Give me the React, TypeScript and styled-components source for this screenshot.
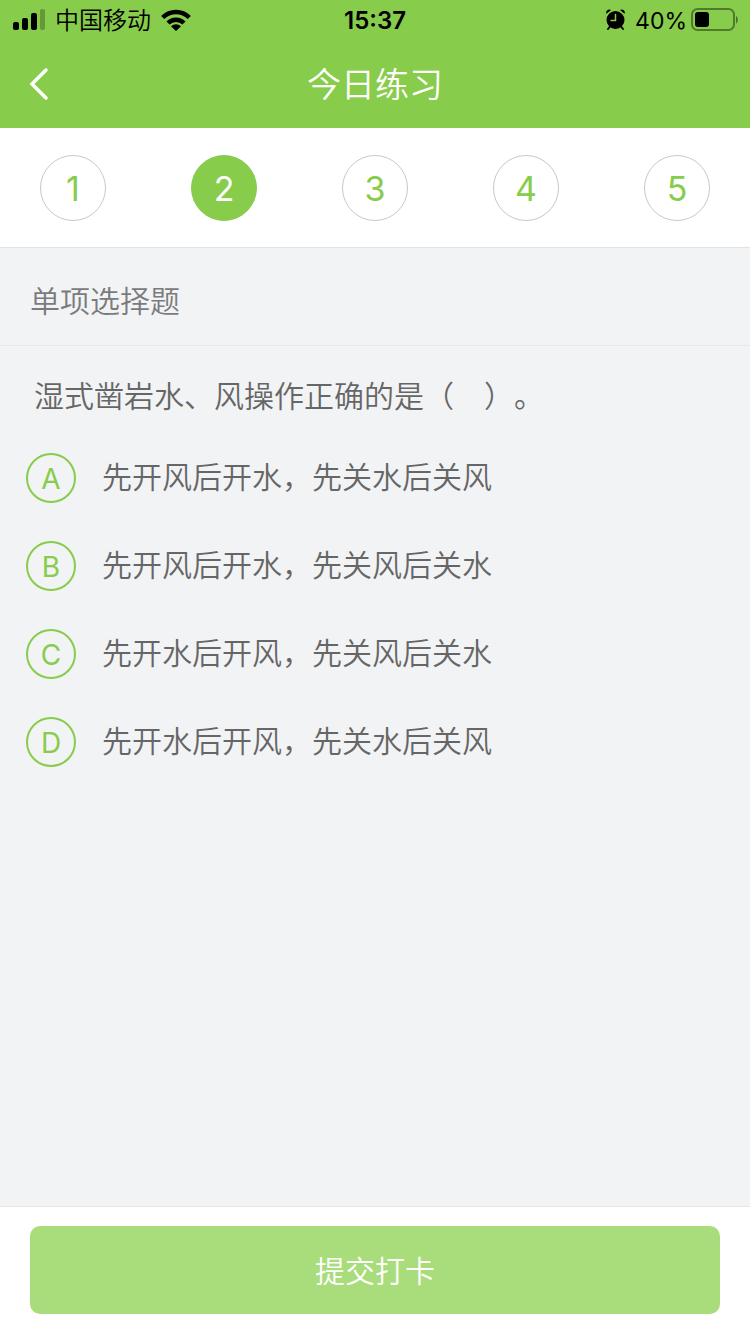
import React, { useState } from "react";
import styled, { createGlobalStyle } from "styled-components";

const GlobalStyle = createGlobalStyle`
  *, *::before, *::after { box-sizing: border-box; }
  body {
    margin: 0;
    background: #f2f3f5;
    font-family: Inter, "Noto Sans CJK SC", sans-serif;
    font-weight: 350;
    text-spacing-trim: space-all;
    color: #666;
  }
  button { font: inherit; padding: 0; border: 0; cursor: pointer; }
`;

const Page = styled.div`
  display: flex;
  flex-direction: column;
  min-height: 100vh;
`;

const Header = styled.header`
  background: #87cc4b;
  color: #fff;
`;

const StatusBar = styled.div`
  display: grid;
  grid-template-columns: 1fr auto 1fr;
  align-items: center;
  height: 40px;
  padding: 0 12px;
  color: #000;
  font-size: 24px;
  line-height: 40px;
`;

const StatusGroup = styled.div<{ $end?: boolean }>`
  display: flex;
  align-items: center;
  justify-content: ${(p) => (p.$end ? "flex-end" : "flex-start")};
  gap: 10px;
`;

const StatusText = styled.span`
  padding-top: 2px;
  line-height: 38px;
`;

const Time = styled(StatusText)`
  font-size: 24px;
  font-weight: 600;
`;

const Level = styled.span`
  display: flex;
  align-items: center;
  gap: 4px;
  font-size: 23px;
  font-weight: 400;
`;

const NavBar = styled.div`
  display: grid;
  grid-template-columns: 1fr auto 1fr;
  align-items: center;
  height: 88px;
  padding: 0 24px;
`;

const BackButton = styled.button`
  display: flex;
  align-items: center;
  justify-self: start;
  height: 60px;
  background: none;
  color: inherit;
`;

const Title = styled.h1`
  margin: 0;
  padding-top: 2px;
  font-size: 34px;
  font-weight: 350;
  line-height: 48px;
`;

const Steps = styled.nav`
  display: flex;
  justify-content: space-between;
  align-items: center;
  height: 120px;
  padding: 0 40px;
  background: #fff;
  border-bottom: 1px solid #e2e3e5;
`;

const StepButton = styled.button<{ $active: boolean }>`
  width: 66px;
  height: 66px;
  padding-top: 2px;
  border: 1px solid ${(p) => (p.$active ? "#87cc4b" : "#c8c8c8")};
  border-radius: 50%;
  background: ${(p) => (p.$active ? "#87cc4b" : "#fff")};
  color: ${(p) => (p.$active ? "#fff" : "#87cc4b")};
  font-size: 34px;
  font-weight: 400;
  line-height: 62px;
`;

const SectionTitle = styled.h2`
  margin: 0;
  padding: 31px 30px 22px;
  border-bottom: 1px solid #e6e7ea;
  color: #7b7b7d;
  font-size: 30px;
  font-weight: 350;
  line-height: 44px;
`;

const Question = styled.fieldset`
  flex: 1;
  min-width: 0;
  margin: 0;
  padding: 28px 26px 40px;
  border: 0;
  font-size: 30px;
  line-height: 44px;
`;

const QuestionText = styled.legend`
  float: left;
  width: 100%;
  padding: 0 8px;
  margin-bottom: 16px;
`;

const Options = styled.div`
  clear: both;
  display: flex;
  flex-direction: column;
`;

const Option = styled.label`
  display: flex;
  align-items: center;
  gap: 26px;
  min-height: 88px;
  cursor: pointer;
`;

const OptionRadio = styled.input`
  position: absolute;
  width: 50px;
  height: 50px;
  margin: 0;
  opacity: 0;
`;

const OptionLetter = styled.span`
  flex: none;
  width: 50px;
  height: 50px;
  border: 2px solid #87cc4b;
  border-radius: 50%;
  color: #87cc4b;
  font-size: 28px;
  font-weight: 400;
  line-height: 48px;
  text-align: center;

  ${OptionRadio}:checked + & {
    background: #87cc4b;
    color: #fff;
  }
`;

const OptionText = styled.span`
  padding-bottom: 2px;
`;

const Footer = styled.footer`
  padding: 19px 30px 20px;
  background: #fff;
  border-top: 1px solid #e6e7ea;
`;

const SubmitButton = styled.button`
  display: block;
  width: 100%;
  height: 88px;
  padding-bottom: 2px;
  border-radius: 10px;
  background: #a9dc7a;
  color: #fff;
  font-size: 30px;
`;

const SignalIcon = () => (
  <svg width="33" height="22" viewBox="-1 0 33 22" aria-hidden="true">
    <rect x="0" y="13" width="6" height="8" rx="2" />
    <rect x="9" y="9" width="6" height="12" rx="2" />
    <rect x="18" y="4" width="6" height="17" rx="2" />
    <rect x="27" y="0" width="5" height="21" rx="2" opacity="0.25" />
  </svg>
);

const WifiIcon = () => (
  <svg width="30" height="22" viewBox="0 0 30 22" aria-hidden="true">
    <g fill="none" stroke="#000" strokeWidth="4.5">
      <path d="M1.7 8.5a19 19 0 0 1 26.6 0" />
      <path d="M7 14a11.500 11.500 0 0 1 16 0" />
    </g>
    <path d="M15 22l-5-4.800a7.200 7.200 0 0 1 10 0z" />
  </svg>
);

const AlarmIcon = () => (
  <svg width="19" height="22" viewBox="0 0 19 22" aria-hidden="true">
    <circle cx="9.500" cy="11" r="9" />
    <path d="M0.500 4.800A3 3 0 0 1 5 1.100zM18.500 4.800A3 3 0 0 0 14 1.100z" />
    <path d="M4 17.500l-2 2.500M15 17.500l2 2.500" stroke="#000" strokeWidth="2" strokeLinecap="round" />
    <path d="M9.500 5.500v6H5" fill="none" stroke="#87cc4b" strokeWidth="1.500" strokeLinecap="round" />
  </svg>
);

const BatteryIcon = () => (
  <svg width="47" height="24" viewBox="0 0 47 24" aria-hidden="true">
    <rect x="1" y="1" width="42" height="21" rx="5.500" fill="none" stroke="#000" strokeOpacity="0.400" strokeWidth="2" />
    <rect x="4" y="4" width="14" height="15" rx="3" />
    <path d="M45 8v7.500c2.400-1 2.400-6.500 0-7.500z" fillOpacity="0.450" />
  </svg>
);

const BackIcon = () => (
  <svg width="28" height="36" viewBox="0 0 28 36" aria-hidden="true">
    <path
      d="M22 4L8 18l14 14"
      fill="none"
      stroke="currentColor"
      strokeWidth="3.500"
      strokeLinecap="round"
      strokeLinejoin="miter"
    />
  </svg>
);

const steps = [1, 2, 3, 4, 5];

const options = [
  { letter: "A", text: "先开风后开水，先关水后关风" },
  { letter: "B", text: "先开风后开水，先关风后关水" },
  { letter: "C", text: "先开水后开风，先关风后关水" },
  { letter: "D", text: "先开水后开风，先关水后关风" },
];

export default function App() {
  const [step, setStep] = useState(2);

  return (
    <Page lang="zh-CN">
      <GlobalStyle />
      <Header>
        <StatusBar>
          <StatusGroup>
            <SignalIcon />
            <StatusText>中国移动</StatusText>
            <WifiIcon />
          </StatusGroup>
          <Time as="time">15:37</Time>
          <StatusGroup $end>
            <AlarmIcon />
            <Level>
              <StatusText>40%</StatusText>
              <BatteryIcon />
            </Level>
          </StatusGroup>
        </StatusBar>
        <NavBar>
          <BackButton type="button" aria-label="返回">
            <BackIcon />
          </BackButton>
          <Title>今日练习</Title>
        </NavBar>
      </Header>

      <Steps aria-label="题目">
        {steps.map((n) => (
          <StepButton
            key={n}
            type="button"
            $active={n === step}
            aria-current={n === step ? "step" : undefined}
            onClick={() => setStep(n)}
          >
            {n}
          </StepButton>
        ))}
      </Steps>

      <SectionTitle>单项选择题</SectionTitle>

      <Question>
        <QuestionText>湿式凿岩水、风操作正确的是（{"\u3000"}）。</QuestionText>
        <Options>
          {options.map((o) => (
            <Option key={o.letter}>
              <OptionRadio type="radio" name="answer" value={o.letter} />
              <OptionLetter>{o.letter}</OptionLetter>
              <OptionText>{o.text}</OptionText>
            </Option>
          ))}
        </Options>
      </Question>

      <Footer>
        <SubmitButton type="button">提交打卡</SubmitButton>
      </Footer>
    </Page>
  );
}
